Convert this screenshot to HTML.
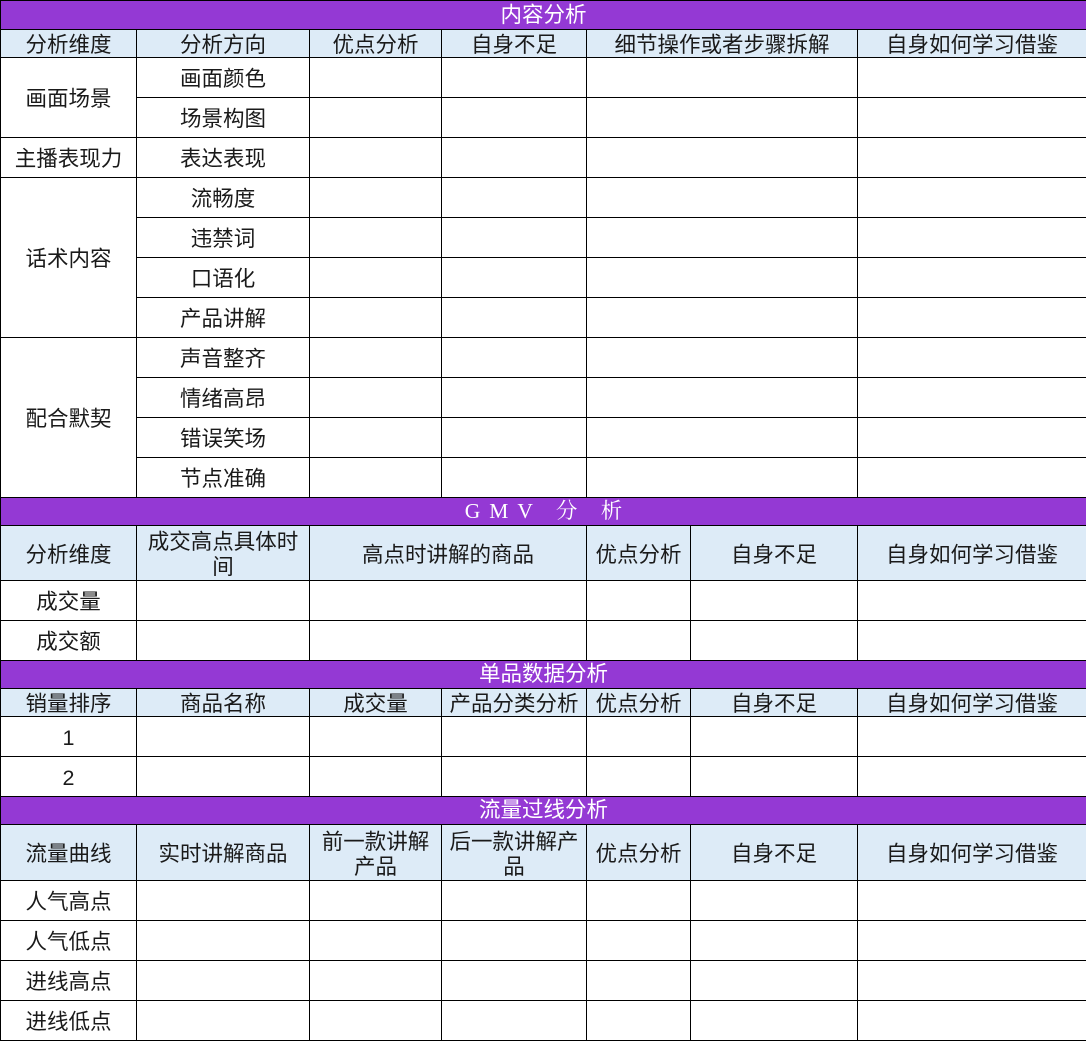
<!DOCTYPE html>
<html><head><meta charset="utf-8"><style>
html,body{margin:0;padding:0;background:#fff;}
table{border-collapse:collapse;table-layout:fixed;width:1086px;font-family:"Liberation Sans","Noto Sans CJK SC",sans-serif;font-size:21.5px;color:#1a1a1a;}
td{border:1px solid #000;padding:0;text-align:center;vertical-align:middle;line-height:25px;overflow:hidden;}
.r td{padding-top:3px;}
.t td{background:#9439d4;color:#fff;}
.h td{background:#ddebf7;}
.h td span{position:relative;top:2px;}
.r{height:40px;}
</style></head><body>
<table>
<colgroup><col style="width:136px"><col style="width:173px"><col style="width:132px"><col style="width:145px"><col style="width:104px"><col style="width:167px"><col style="width:229px"></colgroup>
<tr class="t" style="height:29px"><td colspan="7">内容分析</td></tr>
<tr class="h" style="height:28px"><td><span>分析维度</span></td><td><span>分析方向</span></td><td><span>优点分析</span></td><td><span>自身不足</span></td><td colspan="2"><span>细节操作或者步骤拆解</span></td><td><span>自身如何学习借鉴</span></td></tr>
<tr class="r"><td rowspan="2">画面场景</td><td>画面颜色</td><td></td><td></td><td colspan="2"></td><td></td></tr>
<tr class="r"><td>场景构图</td><td></td><td></td><td colspan="2"></td><td></td></tr>
<tr class="r"><td>主播表现力</td><td>表达表现</td><td></td><td></td><td colspan="2"></td><td></td></tr>
<tr class="r"><td rowspan="4">话术内容</td><td>流畅度</td><td></td><td></td><td colspan="2"></td><td></td></tr>
<tr class="r"><td>违禁词</td><td></td><td></td><td colspan="2"></td><td></td></tr>
<tr class="r"><td>口语化</td><td></td><td></td><td colspan="2"></td><td></td></tr>
<tr class="r"><td>产品讲解</td><td></td><td></td><td colspan="2"></td><td></td></tr>
<tr class="r"><td rowspan="4">配合默契</td><td>声音整齐</td><td></td><td></td><td colspan="2"></td><td></td></tr>
<tr class="r"><td>情绪高昂</td><td></td><td></td><td colspan="2"></td><td></td></tr>
<tr class="r"><td>错误笑场</td><td></td><td></td><td colspan="2"></td><td></td></tr>
<tr class="r"><td>节点准确</td><td></td><td></td><td colspan="2"></td><td></td></tr>
<tr class="t" style="height:28px"><td colspan="7" style="font-family:'Liberation Serif','Noto Serif CJK SC',serif;letter-spacing:9px;padding-left:9px">GMV 分 析</td></tr>
<tr class="h" style="height:55px"><td><span>分析维度</span></td><td><span>成交高点具体时<br>间</span></td><td colspan="2"><span>高点时讲解的商品</span></td><td><span>优点分析</span></td><td><span>自身不足</span></td><td><span>自身如何学习借鉴</span></td></tr>
<tr class="r"><td>成交量</td><td></td><td colspan="2"></td><td></td><td></td><td></td></tr>
<tr class="r"><td>成交额</td><td></td><td colspan="2"></td><td></td><td></td><td></td></tr>
<tr class="t" style="height:28px"><td colspan="7">单品数据分析</td></tr>
<tr class="h" style="height:28px"><td><span>销量排序</span></td><td><span>商品名称</span></td><td><span>成交量</span></td><td><span>产品分类分析</span></td><td><span>优点分析</span></td><td><span>自身不足</span></td><td><span>自身如何学习借鉴</span></td></tr>
<tr class="r"><td>1</td><td></td><td></td><td></td><td></td><td></td><td></td></tr>
<tr class="r"><td>2</td><td></td><td></td><td></td><td></td><td></td><td></td></tr>
<tr class="t" style="height:28px"><td colspan="7">流量过线分析</td></tr>
<tr class="h" style="height:56px"><td><span>流量曲线</span></td><td><span>实时讲解商品</span></td><td><span>前一款讲解<br>产品</span></td><td><span>后一款讲解产<br>品</span></td><td><span>优点分析</span></td><td><span>自身不足</span></td><td><span>自身如何学习借鉴</span></td></tr>
<tr class="r"><td>人气高点</td><td></td><td></td><td></td><td></td><td></td><td></td></tr>
<tr class="r"><td>人气低点</td><td></td><td></td><td></td><td></td><td></td><td></td></tr>
<tr class="r"><td>进线高点</td><td></td><td></td><td></td><td></td><td></td><td></td></tr>
<tr class="r"><td>进线低点</td><td></td><td></td><td></td><td></td><td></td><td></td></tr>
</table>
</body></html>
